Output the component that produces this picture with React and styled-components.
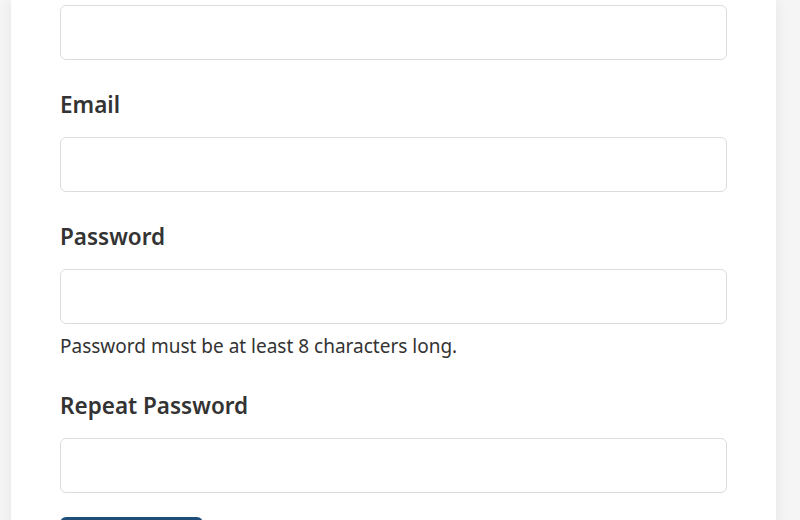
import React from 'react';
import styled, { createGlobalStyle } from 'styled-components';

const GlobalStyle = createGlobalStyle`
  html, body {
    margin: 0;
    padding: 0;
    background: #f5f5f5;
    font-family: "Noto Sans", "Open Sans", sans-serif;
    color: #333;
  }
`;

const Page = styled.div`
  display: flex;
  align-items: flex-start;
`;

const Card = styled.form`
  margin-left: 11px;
  width: 765px;
  min-height: 600px;
  box-sizing: border-box;
  padding: 5px 49px 40px;
  background: #fff;
  box-shadow: 0 0 12px rgba(0, 0, 0, 0.07);
  display: flex;
  flex-direction: column;
`;

const Field = styled.div`
  display: flex;
  flex-direction: column;
  flex-shrink: 0;
  margin-bottom: ${({ $last }) => ($last ? '24px' : '30px')};
`;

const Label = styled.label`
  font-size: 22.5px;
  font-weight: 600;
  line-height: 30px;
  margin-bottom: 17px;
  color: #333;
`;

const Input = styled.input`
  height: 55px;
  box-sizing: border-box;
  border: 1.5px solid #dcdcdc;
  border-radius: 6px;
  padding: 0 14px;
  font-size: 16px;
  font-family: inherit;
  outline: none;
`;

const Help = styled.div`
  margin-top: 10px;
  margin-bottom: 3px;
  font-size: 19px;
  line-height: 24px;
  color: #333;
`;

const Submit = styled.button`
  align-self: flex-start;
  flex-shrink: 0;
  width: 143px;
  height: 48px;
  border: none;
  border-radius: 6px;
  background: #1f4e79;
  color: #fff;
  font-size: 18px;
  font-family: inherit;
`;

const App = () => {
    return (
        <Page>
            <GlobalStyle />
            <Card onSubmit={e => e.preventDefault()}>
                <Field>
                    <Input type='text' />
                </Field>
                <Field>
                    <Label>Email</Label>
                    <Input type='email' />
                </Field>
                <Field>
                    <Label>Password</Label>
                    <Input type='password' />
                    <Help>Password must be at least 8 characters long.</Help>
                </Field>
                <Field $last>
                    <Label>Repeat Password</Label>
                    <Input type='password' />
                </Field>
                <Submit type='submit'>Register</Submit>
            </Card>
        </Page>
    )
}

export default App
